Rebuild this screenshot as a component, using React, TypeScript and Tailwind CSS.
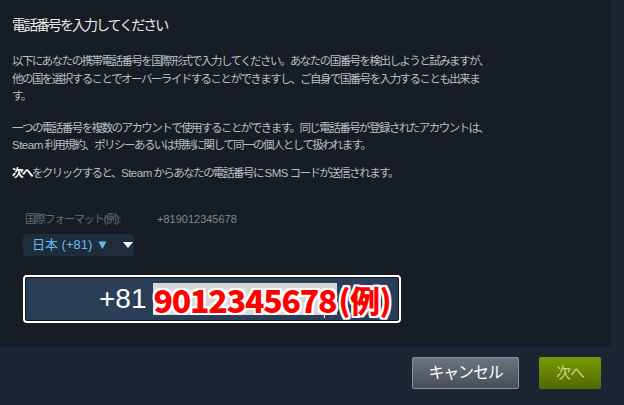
const jp = { fontFamily: '"Liberation Sans", "Noto Sans CJK JP", sans-serif' };

const outline = {
  fontFamily: '"Noto Sans CJK JP", "Liberation Sans", sans-serif',
  textShadow:
    "2px 0 0 #fff, -2px 0 0 #fff, 0 2px 0 #fff, 0 -2px 0 #fff, 2px 2px 0 #fff, -2px -2px 0 #fff, 2px -2px 0 #fff, -2px 2px 0 #fff",
};

export default function App() {
  return (
    <div className="w-[624px] h-[405px] bg-[#1b2534] flex flex-col overflow-hidden" style={jp}>
      <div className="w-[611px] h-[347px] bg-[#171d25] px-3 pt-[15px]">
        <h1 className="text-[14px] leading-[20px] text-[#ececec] tracking-[-2px] whitespace-nowrap">
          電話番号を入力してください
        </h1>

        <div className="mt-[18px] text-[11.5px] leading-[17.5px] text-[#b8bdc2] tracking-[-1.55px] whitespace-nowrap">
          <p>
            以下にあなたの携帯電話番号を国際形式で入力してください。あなたの国番号を検出しようと試みますが、
            <br />
            他の国を選択することでオーバーライドすることができますし、ご自身で国番号を入力することも出来ま
            <br />
            す。
          </p>
          <p className="mt-[14px]">
            一つの電話番号を複数のアカウントで使用することができます。同じ電話番号が登録されたアカウントは、
            <br />
            <span className="tracking-[-0.5px]">Steam</span> 利用規約、ポリシーあるいは規制に関して同一の個人として扱われます。
          </p>
          <p className="mt-[10px]">
            <span className="font-bold text-white">次へ</span>をクリックすると、
            <span className="tracking-[-0.5px]">Steam</span> からあなたの電話番号に <span className="tracking-[-0.5px]">SMS</span> コードが送信されます。
          </p>
        </div>

        <div className="mt-[30px] ml-[13px] flex items-center text-[11px] leading-[14px]">
          <span className="text-[#5f6d7a] w-[132px] tracking-[-1.2px]">国際フォーマット(例):</span>
          <span className="text-[#7d8b98]">+819012345678</span>
        </div>

        <div className="mt-[8px] ml-[11px] w-[111px] h-[22px] rounded-[3px] bg-[#1e2d3c] flex items-center pl-[9px] gap-[14px]">
          <span className="text-[13px] text-[#67b7e8]">日本 (+81) ▼</span>
          <svg width="10" height="6" viewBox="0 0 10 6">
            <path d="M0 0 L10 0 L5 6 Z" fill="#ffffff" />
          </svg>
        </div>

        <div className="mt-[19px] ml-[11px] w-[378px] h-[48px] rounded-[4px] border-2 border-white bg-[#10151c] p-[1px]">
          <div className="h-full bg-[#2a3e57] rounded-[2px] flex items-center pl-[73px] relative">
            <span className="text-[28px] leading-none text-white" style={{ fontFamily: '"Liberation Sans", sans-serif' }}>
              +81
            </span>
            <span className="ml-[6px] h-[32px] bg-[#d7d7d7] flex items-center pl-[1px] pr-[1px]">
              <span className="text-[32px] font-black text-[#ff0000] leading-none tracking-[-1.2px]" style={outline}>
                9012345678
              </span>
            </span>
            <span className="ml-[1px] text-[30px] font-black text-[#ff0000] leading-none tracking-[-0.5px]" style={outline}>
              (例)
            </span>
            <span className="absolute left-[298px] top-[35px] w-px h-[5px] bg-white" />
          </div>
        </div>
      </div>

      <div className="flex justify-end gap-[20px] pr-[23px] pt-[10px]">
        <button className="w-[107px] h-[32px] rounded-[2px] border border-[#8a929b] bg-gradient-to-b from-[#6b747e] to-[#474e57] text-white text-[16px] tracking-[-1.2px]">
          キャンセル
        </button>
        <button className="w-[62px] h-[32px] rounded-[2px] bg-gradient-to-b from-[#799905] to-[#536904] text-[#c6dc7a] text-[15px] tracking-[-1px]">
          次へ
        </button>
      </div>
    </div>
  );
}
